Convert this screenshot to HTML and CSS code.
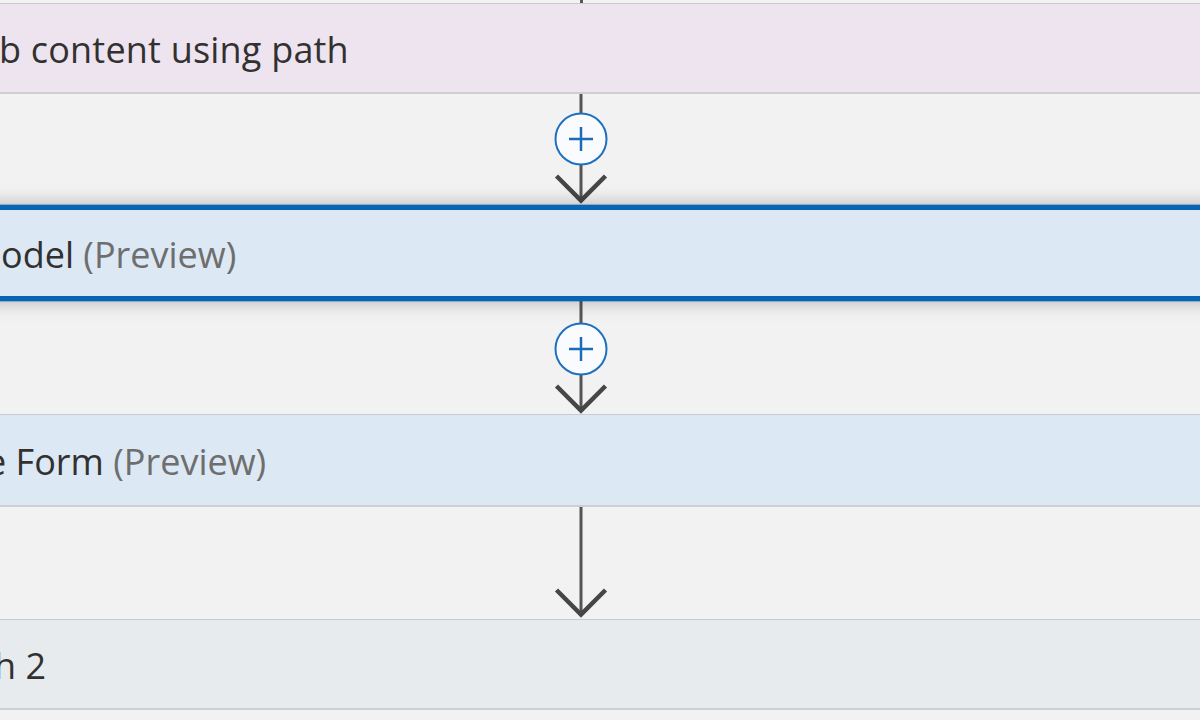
FILE: index.html
```html
<!DOCTYPE html>
<html lang="en">
<head>
<meta charset="utf-8">
<title>Flow</title>
<link rel="stylesheet" href="styles.css">
</head>
<body>
<main class="flow">
  <div class="stub"></div>

  <div class="card card-purple">
    <span class="title shift-first">b content using path</span>
  </div>

  <div class="connector c1">
    <svg width="60" height="111" viewBox="0 0 60 111">
      <line x1="30" y1="0" x2="30" y2="106" class="wire"/>
      <circle cx="30" cy="45" r="25.5" class="plus-ring"/>
      <line x1="18" y1="45" x2="42" y2="45" class="plus"/>
      <line x1="30" y1="33" x2="30" y2="57" class="plus"/>
      <polyline points="5.5,82 30,106.5 54.5,82" class="head"/>
    </svg>
  </div>

  <div class="card card-selected">
    <span class="title shift-sel">odel <span class="muted">(Preview)</span></span>
  </div>

  <div class="connector c2">
    <svg width="60" height="113" viewBox="0 0 60 113">
      <line x1="30" y1="0" x2="30" y2="108" class="wire"/>
      <circle cx="30" cy="48" r="25.5" class="plus-ring"/>
      <line x1="18" y1="48" x2="42" y2="48" class="plus"/>
      <line x1="30" y1="36" x2="30" y2="60" class="plus"/>
      <polyline points="5.5,85 30,109.5 54.5,85" class="head"/>
    </svg>
  </div>

  <div class="card card-blue">
    <span class="title shift-form">e Form <span class="muted">(Preview)</span></span>
  </div>

  <div class="connector c3">
    <svg width="60" height="112" viewBox="0 0 60 112">
      <line x1="30" y1="0" x2="30" y2="106" class="wire"/>
      <polyline points="5.5,83 30,107.5 54.5,83" class="head"/>
    </svg>
  </div>

  <div class="card card-grey">
    <span class="title shift-last">h 2</span>
  </div>
</main>
</body>
</html>
```

FILE: styles.css
```css
html, body {
  margin: 0;
  padding: 0;
}

body {
  width: 1200px;
  height: 720px;
  overflow: hidden;
  background: #f2f2f2;
  font-family: "Open Sans", "Noto Sans", sans-serif;
  color: #323130;
}

.flow {
  width: 1162px;
  display: flex;
  flex-direction: column;
  align-items: center;
}

.stub {
  width: 3px;
  height: 3px;
  background: #555555;
}

.card {
  flex-shrink: 0;
  box-sizing: border-box;
  width: 1400px;
  padding-left: 119px;
  padding-top: 3px;
  display: flex;
  align-items: center;
  border-top: 1px solid #cbcbcb;
  border-bottom: 2px solid #cfcfcf;
}

.title {
  font-size: 36px;
  line-height: 44px;
  white-space: nowrap;
  margin-left: -2px;
}

.muted {
  color: #6e6e6e;
}

.card-purple {
  height: 91px;
  background: #ede4f0;
}

.shift-first {
  margin-left: -1px;
  letter-spacing: 0.2px;
}

.card-selected {
  height: 96px;
  background: #dce8f4;
  border: 5px solid #0a63b4;
  box-shadow: 0 0 0 1px rgba(10, 99, 180, 0.35), 0 0 18px rgba(0, 0, 0, 0.28);
  position: relative;
  z-index: 1;
}

.shift-sel {
  margin-left: -4px;
}

.card-blue {
  height: 93px;
  background: #dce8f3;
}

.card-grey {
  height: 91px;
  background: #e8ebee;
}

.shift-form {
  margin-left: -14px;
}

.shift-last {
  margin-left: -6px;
}

.connector {
  display: flex;
  justify-content: center;
}

.connector svg {
  display: block;
}

.c1 { height: 111px; }
.c2 { height: 113px; }
.c3 { height: 112px; }

.wire {
  stroke: #555555;
  stroke-width: 3;
}

.plus-ring {
  fill: #f9fbfe;
  stroke: #1d70c0;
  stroke-width: 2;
}

.plus {
  stroke: #1a6cbb;
  stroke-width: 2.5;
}

.head {
  fill: none;
  stroke: #464646;
  stroke-width: 4.5;
  stroke-linejoin: miter;
}
```
